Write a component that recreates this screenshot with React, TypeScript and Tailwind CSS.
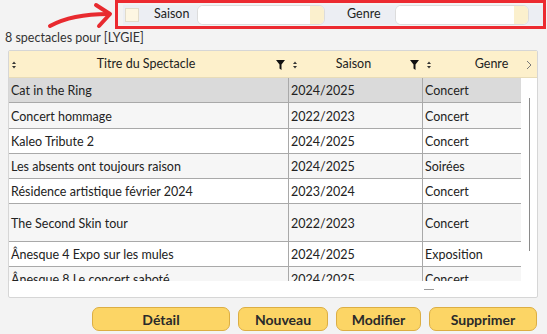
import React from "react";

const rows = [
  { t: "Cat in the Ring", s: "2024/2025", g: "Concert", h: 25 },
  { t: "Concert hommage", s: "2022/2023", g: "Concert", h: 26 },
  { t: "Kaleo Tribute 2", s: "2024/2025", g: "Concert", h: 25 },
  { t: "Les absents ont toujours raison", s: "2024/2025", g: "Soirées", h: 25 },
  { t: "Résidence artistique février 2024", s: "2023/2024", g: "Concert", h: 25 },
  { t: "The Second Skin tour", s: "2022/2023", g: "Concert", h: 38 },
  { t: "Ânesque 4 Expo sur les mules", s: "2024/2025", g: "Exposition", h: 25 },
  { t: "Ânesque 8 Le concert saboté", s: "2024/2025", g: "Concert", h: 25 },
];

function Sort() {
  return (
    <svg width="4" height="8" viewBox="0 0 4 8" className="shrink-0">
      <path d="M0 3 L2 0.5 L4 3 Z" fill="#333" />
      <path d="M0 5 L2 7.5 L4 5 Z" fill="#333" />
    </svg>
  );
}

function Funnel() {
  return (
    <svg width="9" height="10" viewBox="0 0 9 10" className="shrink-0">
      <path d="M0 0 H9 L5.5 4.5 V10 L3.5 8.5 V4.5 Z" fill="#111" />
    </svg>
  );
}

function Input({ w }: { w: string }) {
  return (
    <div className={`${w} h-[20px] flex rounded-[6px] border border-[#dcdcdc] overflow-hidden bg-white`}>
      <div className="flex-1 bg-white" />
      <div className="w-[14px] bg-[#fbf0cd]" />
    </div>
  );
}

export default function App() {
  return (
    <div
      className="w-[547px] h-[334px] bg-[#f3f3f3] overflow-hidden flex flex-col text-[#222]"
      style={{ fontFamily: '"Lato", "Noto Sans", sans-serif' }}
    >
      <div className="flex h-[29px] shrink-0">
        <div className="w-[115px] relative">
          <svg width="115" height="29" viewBox="0 0 115 29" className="absolute left-0 top-0">
            <path d="M50 26 Q 72 14 108 14" stroke="#e82a2f" strokeWidth="4" fill="none" strokeLinecap="round" />
            <path d="M96 5 L110 14 L99 26" stroke="#e82a2f" strokeWidth="4" fill="none" strokeLinecap="round" strokeLinejoin="round" />
          </svg>
        </div>
        <div className="w-[431px] border-[3px] border-[#ec2a30] flex items-center pl-[5px]">
          <div className="flex-1 h-[20px] flex items-center bg-[#eceef3]">
            <div className="w-[14px] h-[14px] bg-[#fdf6e2] border border-[#e2dccb] ml-[2px]" />
            <span className="text-[12.5px] ml-[15px] w-[43px]">Saison</span>
            <Input w="w-[128px]" />
            <span className="text-[12.5px] ml-[22px] w-[48px]">Genre</span>
            <Input w="w-[134px]" />
          </div>
        </div>
      </div>
      <div className="text-[12.5px] pl-[5px] h-[21px] leading-[16px] pt-[1px] text-[#333]">8 spectacles pour [LYGIE]</div>
      <div className="ml-[8px] w-[530px] h-[248px] border border-[#d6d6d6] rounded-[2px] bg-white flex flex-col overflow-hidden">
        <div className="h-[27px] shrink-0 bg-[#fdf0cb] flex items-center text-[12.5px] border-b border-[#e8dcb8] pt-[1px]">
          <div className="w-[280px] flex items-center pl-[3px] pr-[4px]">
            <Sort />
            <span className="flex-1 text-center">Titre du Spectacle</span>
            <Funnel />
          </div>
          <div className="w-[134px] flex items-center pl-[4px] pr-[4px]">
            <Sort />
            <span className="flex-1 text-center">Saison</span>
            <Funnel />
          </div>
          <div className="w-[98px] overflow-hidden">
            <div className="w-[134px] flex items-center pl-[4px] pr-[4px]">
              <Sort />
              <span className="flex-1 text-center pl-[8px]">Genre</span>
              <Funnel />
            </div>
          </div>
          <div className="flex-1 flex justify-center">
            <svg width="6" height="10" viewBox="0 0 6 10">
              <path d="M1 1 L5 5 L1 9" stroke="#777" strokeWidth="1" fill="none" />
            </svg>
          </div>
        </div>
        <div className="flex h-[203px] shrink-0">
          <div className="w-[512px] overflow-hidden">
            {rows.map((r, i) => (
              <div
                key={i}
                className={`flex text-[12.5px] border-b border-[#a9a9a9] ${i === 0 ? "bg-[#dadada]" : i % 2 === 1 ? "bg-[#f6f6f6]" : "bg-white"}`}
                style={{ height: r.h }}
              >
                <div className="w-[280px] pl-[2px] pt-[3px] flex items-center border-r border-[#a9a9a9] whitespace-nowrap">{r.t}</div>
                <div className="w-[134px] pl-[2px] pt-[3px] flex items-center border-r border-[#a9a9a9]">{r.s}</div>
                <div className="flex-1 pl-[2px] pt-[3px] flex items-center">{r.g}</div>
              </div>
            ))}
          </div>
          <div className="flex-1 flex justify-center pt-[20px]">
            <div className="w-[1px] h-[153px] bg-[#8a8a8a]" />
          </div>
        </div>
        <div className="flex-1 flex items-center pl-[415px]">
          <div className="w-[10px] h-[1px] bg-[#999]" />
        </div>
      </div>
      <div className="flex justify-end gap-[8px] pr-[10px] mt-[9px]">
        {[
          ["Détail", "w-[138px]"],
          ["Nouveau", "w-[90px]"],
          ["Modifier", "w-[85px]"],
          ["Supprimer", "w-[108px]"],
        ].map(([l, w]) => (
          <div
            key={l}
            className={`${w} h-[24px] rounded-[7px] bg-[#fcd565] border border-[#dcae43] flex items-center justify-center text-[14px] font-bold text-[#2a2a2a]`}
          >
            {l}
          </div>
        ))}
      </div>
    </div>
  );
}
